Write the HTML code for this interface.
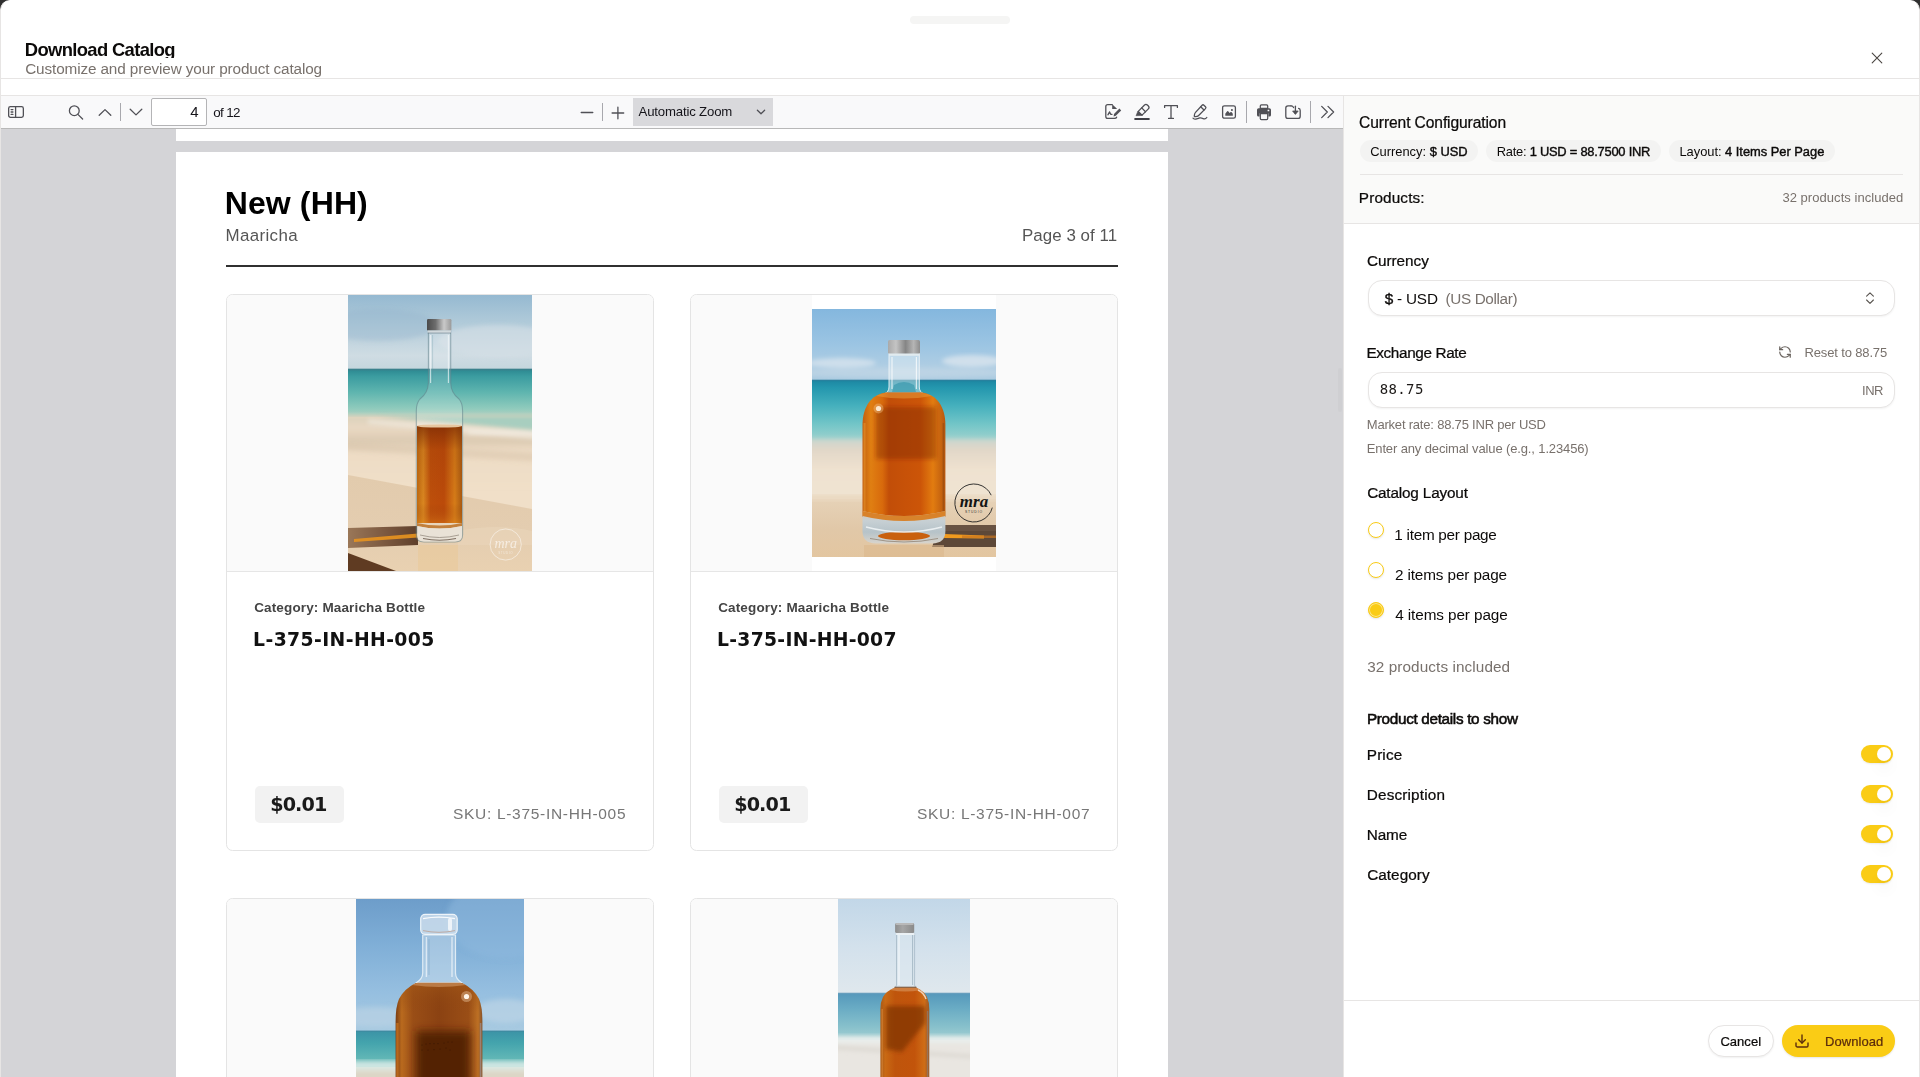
<!DOCTYPE html>
<html lang="en">
<head>
<meta charset="utf-8">
<title>Download Catalog</title>
<style>
*{box-sizing:border-box;margin:0;padding:0}
html,body{width:1920px;height:1077px;overflow:hidden;background:#2f2f2f}
body{font-family:"Liberation Sans",sans-serif;color:#0c0a09;position:relative}
.a{position:absolute}
.t{position:absolute;line-height:1;white-space:pre;font-family:"Liberation Sans",sans-serif}
#drawer{position:absolute;left:0;top:0;width:1920px;height:1100px;background:#fff;border:1px solid #e7e5e4;border-top-color:#fff;border-radius:10px 10px 0 0;overflow:hidden}
svg{position:absolute;overflow:visible}
.ico{stroke:#505056;fill:none;stroke-width:1.3;stroke-linecap:round;stroke-linejoin:round}
.card{position:absolute;width:428px;height:557px;border:1px solid #e4e4e4;border-radius:6.5px;background:#fff;overflow:hidden}
.ci{position:absolute;left:0;top:0;width:426px;height:277px;background:#fafafa;border-bottom:1px solid #e6e6e6}
.badge{position:absolute;left:28px;top:491px;width:89px;height:37px;border-radius:5px;background:#f2f2f2}
.chip{position:absolute;top:140px;height:22px;border-radius:11px;background:#f3f3f2}
.field{position:absolute;left:1368px;width:527px;height:36px;border-radius:14px;border:1px solid #e7e5e4;background:#fff;box-shadow:0 1px 2px rgba(0,0,0,.05)}
.radio{position:absolute;left:1368px;width:16px;height:16px;border-radius:50%;border:1px solid #facc15;background:#fff;box-shadow:0 1px 2px rgba(0,0,0,.10)}
.radio.on{background:#facc15;box-shadow:inset 0 0 0 1px #fde68a,0 1px 2px rgba(0,0,0,.10)}
.sw{position:absolute;left:1861px;width:32px;height:18px;border-radius:9px;background:#facc15;box-shadow:0 1px 2px rgba(0,0,0,.08)}
.sw i{position:absolute;left:16px;top:2px;width:14px;height:14px;border-radius:50%;background:#fff;box-shadow:0 10px 15px -3px rgba(0,0,0,.10),0 4px 6px -4px rgba(0,0,0,.10)}
</style>
</head>
<body>
<div id="drawer">
<div style="position:absolute;left:-1px;top:-1px;width:1920px;height:1100px">
<!-- drawer chrome -->
<div class="a" style="left:910px;top:16px;width:100px;height:8px;border-radius:4px;background:#f5f5f4"></div>
<div class="a" style="left:1px;top:78px;width:1918px;height:1px;background:#e7e5e4"></div>
<div class="a" style="left:1px;top:95px;width:1918px;height:1px;background:#e7e5e4"></div>
<!-- title clip box -->
<div class="a" style="left:20px;top:30px;width:400px;height:28px;overflow:hidden" id="titleclip"></div>
<svg style="left:1871px;top:52px" width="12" height="12" viewBox="0 0 12 12"><path d="M1.2 1.2 L10.8 10.8 M10.8 1.2 L1.2 10.8" stroke="#4a4541" stroke-width="1.1" stroke-linecap="round" fill="none"/></svg>
<!-- pdf viewer background -->
<div class="a" style="left:1px;top:96px;width:1342px;height:1000px;background:#d4d4d7"></div>
<div class="a" style="left:1343px;top:96px;width:1px;height:1000px;background:#e7e5e4"></div>
<div class="a" style="left:1338px;top:368px;width:4px;height:44px;border-radius:2px;background:#cfcfd2"></div>
<!-- pdf.js toolbar -->
<div class="a" style="left:1px;top:96px;width:1342px;height:32px;background:#f9f9fa"></div>
<div class="a" style="left:1px;top:128px;width:1342px;height:1px;background:#b8b8b8"></div>
<!-- sidebar toggle -->
<svg style="left:7px;top:104px" width="18" height="16" viewBox="0 0 18 16"><rect class="ico" x="1.65" y="2.65" width="14.7" height="10.7" rx="1.8"/><path class="ico" d="M8.6 2.8V13.2M4.1 5.6H5.9M4.1 8H5.9M4.1 10.4H5.9" stroke-width="1.1"/></svg>
<!-- search -->
<svg style="left:67px;top:104px" width="18" height="16" viewBox="0 0 18 16"><circle class="ico" cx="7.3" cy="6.7" r="4.9"/><path class="ico" d="M10.9 10.4L15.6 15"/></svg>
<!-- prev / next -->
<svg style="left:97px;top:104px" width="16" height="16" viewBox="0 0 16 16"><path class="ico" d="M2.2 11.3L8 5.6L13.8 11.3"/></svg>
<div class="a" style="left:120px;top:103px;width:1px;height:18px;background:#a8a8ad"></div>
<svg style="left:128px;top:104px" width="16" height="16" viewBox="0 0 16 16"><path class="ico" d="M2.2 5.2L8 10.9L13.8 5.2"/></svg>
<!-- page input -->
<div class="a" style="left:151px;top:98px;width:56px;height:28px;background:#fff;border:1px solid #b4b4b6;border-radius:2px"></div>
<!-- zoom out / in -->
<svg style="left:579px;top:104px" width="16" height="16" viewBox="0 0 16 16"><path class="ico" d="M2.2 8.5H13.8" stroke-width="1.1"/></svg>
<div class="a" style="left:602px;top:103px;width:1px;height:18px;background:#a8a8ad"></div>
<svg style="left:610px;top:105px" width="16" height="16" viewBox="0 0 16 16"><path class="ico" d="M2.1 8H13.7M7.9 2.2V13.8" stroke-width="1.1"/></svg>
<!-- scale select -->
<div class="a" style="left:633px;top:98px;width:140px;height:28px;background:#d9d9dc"></div>
<svg style="left:755px;top:107px" width="12" height="10" viewBox="0 0 12 10"><path class="ico" d="M2.4 3.2L6 6.8L9.6 3.2" stroke="#15141a" stroke-width="1.2"/></svg>
<!-- editor buttons -->
<svg style="left:1103px;top:102px" width="20" height="20" viewBox="0 0 20 20"><path class="ico" d="M9.2 2.7H4.7Q2.8 2.7 2.8 4.6V14.5Q2.8 16.4 4.7 16.4H11.6Q13.2 16.4 13.6 15.2" stroke-width="1.35"/><path d="M9.2 2.2L14.2 7.1H9.2Z" fill="#505056"/><path d="M11 12L16.4 6.6L18.2 8.4L12.8 13.8L10.6 14.4Z" fill="#505056"/><path class="ico" d="M4.9 12.8L6.6 9.9L7.7 12.3H9" stroke-width="1.05"/></svg>
<svg style="left:1132px;top:102px" width="20" height="20" viewBox="0 0 20 20"><g transform="translate(11.9 7.5) rotate(-45)"><path class="ico" d="M-5.3 -2.7H3.6Q5.6 -2.7 5.6 -0.7V0.7Q5.6 2.7 3.6 2.7H-5.3Z" stroke-width="1.3"/><path class="ico" d="M-0.4 -2.7V2.7" stroke-width="1.15"/><path d="M-5.3 -3.1L-5.3 3.1L-10 -1.2Z" fill="#505056" stroke="#505056" stroke-width=".5" stroke-linejoin="round"/></g><path d="M2.4 17H17.6" stroke="#3f3f46" stroke-width="1.8" fill="none"/></svg>
<svg style="left:1161px;top:102px" width="20" height="20" viewBox="0 0 20 20"><path class="ico" d="M3.6 5.4V3.6H16.4V5.4M10 3.6V16.4M7.6 16.4H12.4" stroke-width="1.35"/></svg>
<svg style="left:1190px;top:102px" width="20" height="20" viewBox="0 0 20 20"><path class="ico" d="M12.1 3.2Q13 2.3 13.9 3.2L15.5 4.8Q16.4 5.7 15.5 6.6L8.4 13.7Q7.6 14.5 5.2 14.7Q4.2 14.8 4.3 13.8Q4.5 11.4 5.3 10.6Z"/><path class="ico" d="M10.7 4.7L14 8" stroke-width="1"/><path class="ico" d="M3 16.1Q4.6 17.6 6.6 16.9T9.8 15.9T13.2 16.6T16.8 15.5" stroke-width="1.05"/></svg>
<svg style="left:1219px;top:102px" width="20" height="20" viewBox="0 0 20 20"><rect class="ico" x="3.6" y="3.8" width="12.8" height="12.4" rx="1.8"/><path d="M6.3 13.7V12.1Q6.3 11.5 6.8 11L8.2 9.3Q8.7 8.8 9.2 9.3L10.6 10.9L11.7 10.1Q12.3 9.8 12.7 10.3L13.5 11.3Q13.8 11.7 13.8 12.3V13.7Z" fill="#505056"/><circle cx="12.9" cy="8" r="1.05" fill="#505056"/></svg>
<div class="a" style="left:1246px;top:101px;width:1px;height:22px;background:#a8a8ad"></div>
<!-- print -->
<svg style="left:1254px;top:102px" width="20" height="20" viewBox="0 0 20 20"><path d="M7.4 2.8H12.6Q13.7 2.8 13.7 3.9V6.4H6.3V3.9Q6.3 2.8 7.4 2.8Z" fill="none" stroke="#505056" stroke-width="1.25"/><path d="M4.6 6.2H15.4Q17 6.2 17 7.8V13Q17 14.6 15.4 14.6H14.4V11.2H5.6V14.6H4.6Q3 14.6 3 13V7.8Q3 6.2 4.6 6.2Z" fill="#505056"/><rect x="13.6" y="7.7" width="1.7" height="1.6" rx=".3" fill="#f9f9fa"/><path d="M6.3 11.6H13.7V16.6Q13.7 17.7 12.6 17.7H7.4Q6.3 17.7 6.3 16.6Z" fill="none" stroke="#505056" stroke-width="1.25"/></svg>
<!-- save -->
<svg style="left:1283px;top:102px" width="20" height="20" viewBox="0 0 20 20"><path class="ico" d="M8 3.8H5Q2.8 3.8 2.8 6V14.2Q2.8 16.4 5 16.4H15Q17.2 16.4 17.2 14.2V8.4Q17.2 6.6 15.6 6.4" /><path class="ico" d="M8 3.8Q10 3.8 10.6 5.6" /><path class="ico" d="M12.4 4.2V11.4"/><path d="M9.6 9L12.4 12.4L15.2 9Z" fill="#505056" stroke="#505056" stroke-width="0.8" stroke-linejoin="round"/></svg>
<div class="a" style="left:1310px;top:101px;width:1px;height:22px;background:#a8a8ad"></div>
<svg style="left:1318px;top:103px" width="18" height="18" viewBox="0 0 18 18"><path class="ico" d="M3.7 3.4L9.3 9L3.7 14.6M10 3.4L15.6 9L10 14.6" stroke-width="1.2"/></svg>
<!-- pdf pages -->
<div class="a" style="left:176px;top:129px;width:992px;height:12px;background:#fff"></div>
<div class="a" style="left:176px;top:152px;width:992px;height:960px;background:#fff"></div>
<div class="a" style="left:226px;top:265px;width:892px;height:2px;background:#303030"></div>
<!-- cards -->
<div class="card" style="left:226px;top:294px"><div class="ci"></div><div class="badge"></div></div>
<div class="card" style="left:690px;top:294px"><div class="ci"></div><div class="badge"></div></div>
<div class="card" style="left:226px;top:898px"><div class="ci"></div></div>
<div class="card" style="left:690px;top:898px"><div class="ci"></div></div>
<svg style="left:348px;top:295px;overflow:hidden" width="184" height="276" viewBox="0 0 184 276">
<defs>
<linearGradient id="a1sky" x1="0" y1="0" x2="0" y2="1"><stop offset="0" stop-color="#95b9d1"/><stop offset=".4" stop-color="#b3ccda"/><stop offset=".8" stop-color="#cfdce3"/><stop offset="1" stop-color="#c3d5dd"/></linearGradient>
<linearGradient id="a1sea" x1="0" y1="0" x2="0" y2="1"><stop offset="0" stop-color="#2b8790"/><stop offset=".14" stop-color="#3b9ca0"/><stop offset=".45" stop-color="#5fb5af"/><stop offset=".75" stop-color="#8ecabc"/><stop offset="1" stop-color="#c0d7c6"/></linearGradient>
<linearGradient id="a1sand" x1="0" y1="0" x2="0" y2="1"><stop offset="0" stop-color="#d9d0bb"/><stop offset=".18" stop-color="#e9d9c3"/><stop offset=".36" stop-color="#dccab2"/><stop offset=".5" stop-color="#eddcc5"/><stop offset="1" stop-color="#f0dfc8"/></linearGradient>
<linearGradient id="a1tab" x1="0" y1="0" x2="0" y2="1"><stop offset="0" stop-color="#e2cbad"/><stop offset=".6" stop-color="#e4cdb0"/><stop offset="1" stop-color="#e9d1b1"/></linearGradient>
<linearGradient id="a1liq" x1="0" y1="0" x2="1" y2="0"><stop offset="0" stop-color="#c06a10"/><stop offset=".14" stop-color="#d98620"/><stop offset=".3" stop-color="#bd4f0b"/><stop offset=".6" stop-color="#bb4a0a"/><stop offset=".84" stop-color="#d67c18"/><stop offset="1" stop-color="#a85a12"/></linearGradient>
<linearGradient id="a1liqv" x1="0" y1="0" x2="0" y2="1"><stop offset="0" stop-color="#7a2a05" stop-opacity=".75"/><stop offset=".25" stop-color="#7a2a05" stop-opacity=".15"/><stop offset=".8" stop-color="#7a2a05" stop-opacity="0"/><stop offset="1" stop-color="#e08a20" stop-opacity=".35"/></linearGradient>
<linearGradient id="a1cap" x1="0" y1="0" x2="1" y2="0"><stop offset="0" stop-color="#4b4b4b"/><stop offset=".35" stop-color="#6d6d6d"/><stop offset=".7" stop-color="#c9c9c9"/><stop offset="1" stop-color="#9a9a9a"/></linearGradient>
<linearGradient id="a1sh" x1="0" y1="0" x2="1" y2="0"><stop offset="0" stop-color="#9a7758"/><stop offset=".5" stop-color="#7d5a41"/><stop offset="1" stop-color="#5e3f2b"/></linearGradient>
<filter id="a1bl" x="-10%" y="-10%" width="120%" height="120%"><feGaussianBlur stdDeviation="2"/></filter>
</defs>
<rect width="184" height="76" fill="url(#a1sky)"/>
<rect y="74" width="184" height="52" fill="url(#a1sea)"/>
<rect y="73.6" width="184" height="1.8" fill="#3f7f8c" opacity=".8"/>
<rect y="122" width="184" height="154" fill="#f0dfc8"/><g filter="url(#a1bl)"><rect x="-10" y="120" width="204" height="72" fill="url(#a1sand)"/><rect x="120" y="136" width="70" height="3" fill="#f4efe6" opacity=".8"/><ellipse cx="30" cy="30" rx="60" ry="16" fill="#8fb3cb" opacity=".35"/><ellipse cx="150" cy="46" rx="60" ry="16" fill="#d6e0e6" opacity=".6"/></g>
<g filter="url(#a1bl)"><path d="M30 121L194 121V136Z" fill="#a4cdbf" opacity=".95"/><path d="M20 124L194 137V145L20 129Z" fill="#f1ece2" opacity=".6"/><path d="M-10 147L194 158V167L-10 155Z" fill="#d3bfa6" opacity=".4"/></g>
<path d="M0 180L184 214V276H0Z" fill="url(#a1tab)"/>
<path d="M110 236Q150 228 184 236V250H110Z" fill="#ead6bb" opacity=".6"/>
<!-- shadow -->
<path d="M0 233L70 231V250L0 253Z" fill="url(#a1sh)"/>
<path d="M6 244L70 238.5V242.5L6 247Z" fill="#e8931f" opacity=".9"/>
<path d="M0 258L48 276H0Z" fill="#5f3b22"/>
<path d="M0 253L70 250L118 262L48 276L0 258Z" fill="#e6cfae" opacity=".0"/>
<!-- reflection under bottle -->
<rect x="70" y="250" width="40" height="26" fill="#e9c898" opacity=".55"/>
<!-- bottle glass -->
<path d="M80.4 36V88Q80 98 72 104Q68.3 108 68.3 116V240Q68.3 247 76 247H107Q114.6 247 114.6 240V116Q114.6 108 111 104Q103 98 102.7 88V36Z" fill="#ffffff" fill-opacity=".16" stroke="#5f7f88" stroke-opacity=".55" stroke-width="1.1"/>
<path d="M82.6 40V88M100.4 40V88" stroke="#f4f8f9" stroke-width="1.1" opacity=".7" fill="none"/>
<path d="M84.6 40V88" stroke="#5d8f99" stroke-width=".6" opacity=".45" fill="none"/>
<!-- liquid -->
<rect x="69" y="131" width="45" height="97" fill="url(#a1liq)"/>
<rect x="69" y="131" width="45" height="97" fill="url(#a1liqv)"/>
<ellipse cx="91.5" cy="131" rx="22.5" ry="1.6" fill="#e7c6a0"/>
<path d="M69 228Q91.5 233 114 228V231Q91.5 236 69 231Z" fill="#b96a1c" opacity=".8"/>
<!-- base -->
<path d="M69 231Q91.5 236 114 231V240Q114 246.5 107 246.5H76Q69 246.5 69 240Z" fill="#e9e4dc" opacity=".85"/>
<path d="M72 240Q91.5 245 111 240" stroke="#8d8378" stroke-width="1" fill="none" opacity=".7"/>
<path d="M75 243.5Q91.5 247 108 243.5" stroke="#5b4a3c" stroke-width="1.1" fill="none" opacity=".75"/>
<!-- cap -->
<rect x="79" y="24" width="24.4" height="11.6" rx="1.2" fill="url(#a1cap)"/>
<rect x="79.6" y="35.4" width="23.4" height="2.4" fill="#d7dde0" opacity=".9"/>
<rect x="79.6" y="37.6" width="23.4" height=".9" fill="#6b7f88" opacity=".7"/>
<!-- watermark -->
<circle cx="157.7" cy="249.5" r="15.6" fill="none" stroke="#fff" stroke-opacity=".55" stroke-width=".9"/>
<text x="157.7" y="253" text-anchor="middle" font-family="'Liberation Serif',serif" font-style="italic" font-size="14" fill="#fff" fill-opacity=".6">mra</text>
<text x="157.7" y="258.6" text-anchor="middle" font-family="'Liberation Sans',sans-serif" font-size="3" letter-spacing=".6" fill="#fff" fill-opacity=".5">STUDIO</text>
</svg>

<svg style="left:812px;top:295px;overflow:hidden" width="184" height="276" viewBox="0 0 184 276">
<defs>
<linearGradient id="b2sky" x1="0" y1="0" x2="0" y2="1"><stop offset="0" stop-color="#84b7de"/><stop offset=".5" stop-color="#9cc5e3"/><stop offset=".85" stop-color="#b3cfe3"/><stop offset="1" stop-color="#a7c9df"/></linearGradient>
<linearGradient id="b2sea" x1="0" y1="0" x2="0" y2="1"><stop offset="0" stop-color="#1c86a2"/><stop offset=".12" stop-color="#2497ae"/><stop offset=".4" stop-color="#45b0bd"/><stop offset=".7" stop-color="#74c6c8"/><stop offset="1" stop-color="#a9d4cf"/></linearGradient>
<linearGradient id="b2sand" x1="0" y1="0" x2="0" y2="1"><stop offset="0" stop-color="#c9d6cf"/><stop offset=".15" stop-color="#e1d7c8"/><stop offset=".45" stop-color="#efe2d0"/><stop offset="1" stop-color="#f0e3d2"/></linearGradient>
<linearGradient id="b2tab" x1="0" y1="0" x2="0" y2="1"><stop offset="0" stop-color="#e6d2b7"/><stop offset=".5" stop-color="#e1c8a8"/><stop offset="1" stop-color="#e3c6a0"/></linearGradient>
<linearGradient id="b2liq" x1="0" y1="0" x2="1" y2="0"><stop offset="0" stop-color="#c25f10"/><stop offset=".1" stop-color="#e07f12"/><stop offset=".24" stop-color="#d86a0c"/><stop offset=".32" stop-color="#c24e08"/><stop offset=".7" stop-color="#cc5508"/><stop offset=".85" stop-color="#e27c10"/><stop offset="1" stop-color="#b8570f"/></linearGradient>
<radialGradient id="b2dark" cx=".5" cy=".5" r=".5"><stop offset="0" stop-color="#7c2604" stop-opacity=".6"/><stop offset=".6" stop-color="#86300a" stop-opacity=".4"/><stop offset="1" stop-color="#9a3b0a" stop-opacity="0"/></radialGradient>
<linearGradient id="b2cap" x1="0" y1="0" x2="1" y2="0"><stop offset="0" stop-color="#a9a9a9"/><stop offset=".25" stop-color="#c4c4c4"/><stop offset=".55" stop-color="#858585"/><stop offset=".8" stop-color="#b5b5b5"/><stop offset="1" stop-color="#8d8d8d"/></linearGradient>
<linearGradient id="b2base" x1="0" y1="0" x2="0" y2="1"><stop offset="0" stop-color="#d9c6ad"/><stop offset=".3" stop-color="#c7d0d4"/><stop offset=".65" stop-color="#b6c3c9"/><stop offset="1" stop-color="#d8d4cc"/></linearGradient>
<filter id="b2bl" x="-10%" y="-10%" width="120%" height="120%"><feGaussianBlur stdDeviation="2.2"/></filter>
<clipPath id="b2clip"><rect y="14" width="184" height="248"/></clipPath>
</defs>
<rect width="184" height="276" fill="#fff"/>
<g clip-path="url(#b2clip)">
<rect y="14" width="184" height="73" fill="url(#b2sky)"/>
<g filter="url(#b2bl)"><ellipse cx="30" cy="68" rx="34" ry="5" fill="#d6e3ee" opacity=".8"/><ellipse cx="160" cy="66" rx="30" ry="6" fill="#d9e5ee" opacity=".8"/><ellipse cx="92" cy="78" rx="100" ry="5" fill="#c0d6e6" opacity=".7"/></g>
<rect y="85" width="184" height="64" fill="url(#b2sea)"/>
<rect y="84.6" width="184" height="1.6" fill="#2c7f9c" opacity=".75"/>
<g filter="url(#b2bl)"><rect x="-10" y="144" width="204" height="70" fill="url(#b2sand)"/></g>
<rect y="204" width="184" height="60" fill="url(#b2tab)"/>
<g filter="url(#b2bl)"><rect x="-10" y="200" width="204" height="6" fill="#ead8c0"/></g>
<!-- shadow -->
<path d="M128 230H184V252H120Z" fill="#5d4838"/>
<path d="M128 230H184V236H128Z" fill="#6f5a4a" opacity=".6"/>
<path d="M132 239L172 240.5V243.5L132 243Z" fill="#f09a1e"/>
<path d="M150 240.6H184V243H150Z" fill="#c8751f" opacity=".7"/>
<rect x="52" y="250" width="80" height="14" fill="#dab68a" opacity=".55"/>
<!-- neck glass -->
<path d="M77 58V92Q77 97 72 99H112Q107.3 97 107.3 92V58Z" fill="#e9f2f6" fill-opacity=".42" stroke="#eef4f7" stroke-opacity=".9" stroke-width="1"/>
<path d="M80 62V94M104.4 62V94" stroke="#fff" stroke-width="1.2" opacity=".7" fill="none"/>
<path d="M82 90Q92 84 102 90L104 97H80Z" fill="#2a8fa6" opacity=".55"/>
<!-- body with liquid -->
<path d="M74 97.4H110C125 99.5 133.4 112 133.4 130V222H50.5V130C50.5 112 59 99.5 74 97.4Z" fill="url(#b2liq)"/>

<g filter="url(#b2bl)"><rect x="64" y="112" width="60" height="52" fill="#7a2604" opacity=".42"/></g>
<path d="M74 97.4H110Q116 98.6 120 101Q92 106 64 101Q68 98.6 74 97.4Z" fill="#e89a3a" opacity=".55"/>
<circle cx="66.5" cy="113.5" r="2.6" fill="#fff" opacity=".9"/><circle cx="66.5" cy="113.5" r="5" fill="#ffd9a0" opacity=".35"/>
<path d="M52.5 128V218" stroke="#f0a030" stroke-width="2" opacity=".45" fill="none"/>
<path d="M131.4 128V218" stroke="#8a4510" stroke-width="1.6" opacity=".5" fill="none"/>
<!-- base glass -->
<path d="M50.5 216Q92 226 133.4 216V236Q133.4 248.4 120 248.4H64Q50.5 248.4 50.5 236Z" fill="url(#b2base)"/>
<path d="M50.5 216Q92 226 133.4 216V221Q92 231 50.5 221Z" fill="#d9760f" opacity=".85"/>
<ellipse cx="92" cy="241" rx="26" ry="4.2" fill="#c9600e"/>
<path d="M54 232Q92 242 130 232" stroke="#eef3f5" stroke-width="1.6" fill="none" opacity=".9"/>
<path d="M58 243.5Q92 250.5 126 243.5" stroke="#7d6a58" stroke-width="1" fill="none" opacity=".6"/>
<!-- cap -->
<rect x="76" y="45" width="32" height="13.8" rx="1.6" fill="url(#b2cap)"/>
<rect x="77" y="58.6" width="30.3" height="2.2" fill="#e4ecf0" opacity=".9"/>
<!-- logo -->
<path d="M179.2 200.2A19 19 0 1 0 180.3 212.6" fill="none" stroke="#1f1f1f" stroke-width=".9"/>
<text x="162" y="211.5" text-anchor="middle" font-family="'Liberation Serif',serif" font-style="italic" font-weight="700" font-size="17" fill="#141414">mra</text>
<text x="162" y="218.4" text-anchor="middle" font-family="'Liberation Sans',sans-serif" font-size="3.4" letter-spacing=".9" fill="#333">STUDIO</text>
</g>
</svg>

<svg style="left:356px;top:899px;overflow:hidden" width="168" height="200" viewBox="0 0 168 200">
<defs>
<linearGradient id="c3sky" x1="0" y1="0" x2="0" y2="1"><stop offset="0" stop-color="#6d9dca"/><stop offset=".35" stop-color="#80afd7"/><stop offset=".7" stop-color="#96bfe0"/><stop offset="1" stop-color="#a9cbe1"/></linearGradient>
<linearGradient id="c3sea" x1="0" y1="0" x2="0" y2="1"><stop offset="0" stop-color="#3b93a6"/><stop offset=".3" stop-color="#44a4ad"/><stop offset=".7" stop-color="#62b7b6"/><stop offset="1" stop-color="#8ccac3"/></linearGradient>
<linearGradient id="c3liq" x1="0" y1="0" x2="1" y2="0"><stop offset="0" stop-color="#7a3c12"/><stop offset=".07" stop-color="#b96a1e"/><stop offset=".2" stop-color="#9a4e16"/><stop offset=".5" stop-color="#8b4212"/><stop offset=".84" stop-color="#9a4e16"/><stop offset=".95" stop-color="#bd7024"/><stop offset="1" stop-color="#86522a"/></linearGradient>
<linearGradient id="c3liqv" x1="0" y1="0" x2="0" y2="1"><stop offset="0" stop-color="#a55a18" stop-opacity=".55"/><stop offset=".25" stop-color="#8a4210" stop-opacity="0"/><stop offset="1" stop-color="#8a4210" stop-opacity="0"/></linearGradient>
<filter id="c3bl" x="-10%" y="-10%" width="120%" height="120%"><feGaussianBlur stdDeviation="2.5"/></filter>
<filter id="c3bl2" x="-20%" y="-20%" width="140%" height="140%"><feGaussianBlur stdDeviation="4"/></filter>
</defs>
<rect width="168" height="134" fill="url(#c3sky)"/>
<g filter="url(#c3bl)"><ellipse cx="150" cy="20" rx="60" ry="40" fill="#8fbade" opacity=".5"/><ellipse cx="20" cy="118" rx="40" ry="10" fill="#b9d2e4" opacity=".7"/><ellipse cx="150" cy="112" rx="30" ry="12" fill="#bcd4e6" opacity=".7"/></g>
<rect y="132" width="168" height="40" fill="url(#c3sea)"/>
<rect y="131.4" width="168" height="1.6" fill="#3f89a0" opacity=".7"/>
<rect y="168" width="168" height="32" fill="#e6dccb"/>
<g filter="url(#c3bl)"><rect x="-10" y="162" width="190" height="9" fill="#d9ebe8" opacity=".9"/><rect x="-10" y="172" width="190" height="10" fill="#dcd6c6"/></g>
<!-- lip + neck glass -->
<path d="M66.7 36V74Q66.7 80 60 84H106Q99.5 80 99.5 74V36Z" fill="#dfeaf3" fill-opacity=".38" stroke="#e6eff6" stroke-opacity=".9" stroke-width="1.2"/>
<path d="M70.4 38V78M96 38V78" stroke="#fff" stroke-width="1.4" opacity=".6" fill="none"/>
<path d="M73 40V76" stroke="#5d86ad" stroke-width=".8" opacity=".4" fill="none"/>
<rect x="64.7" y="15.3" width="36.5" height="20" rx="4.5" fill="#d4e2ee" fill-opacity=".78" stroke="#eef4f9" stroke-width="1.2"/>
<path d="M67 31.6Q83 35 99 31.6" stroke="#b9876a" stroke-width="1" opacity=".55" fill="none"/>
<path d="M67 19.6Q83 16.6 99 19.6" stroke="#fff" stroke-width="1.3" opacity=".9" fill="none"/>
<rect x="92" y="19" width="4" height="13" rx="2" fill="#fff" opacity=".7"/>
<!-- body -->
<path d="M60 84H106Q118 90 123 100Q126.4 108 126.4 122V200H39.6V122Q39.6 108 43 100Q48 90 60 84Z" fill="url(#c3liq)"/>
<path d="M60 84H106Q118 90 123 100Q126.4 108 126.4 122V200H39.6V122Q39.6 108 43 100Q48 90 60 84Z" fill="url(#c3liqv)"/>
<g filter="url(#c3bl2)"><rect x="60" y="132" width="54" height="80" fill="#4e1d06" opacity=".9"/></g>
<path d="M62 83.4H104Q108 84.4 110 86Q83 90 56 86Q58 84.4 62 83.4Z" fill="#c98d5a" opacity=".7"/>
<path d="M41.4 124V200" stroke="#c9731f" stroke-width="2.4" opacity=".7" fill="none"/>
<path d="M124.6 124V200" stroke="#9b8f92" stroke-width="1.6" opacity=".7" fill="none"/>
<circle cx="110.5" cy="97.5" r="2.6" fill="#fff"/><circle cx="110.5" cy="97.5" r="5.5" fill="#ffe2c0" opacity=".35"/>
<g fill="#2a1004" opacity=".6"><circle cx="66" cy="146" r=".6"/><circle cx="70" cy="145" r=".6"/><circle cx="74" cy="144.6" r=".6"/><circle cx="78" cy="144.6" r=".6"/><circle cx="82" cy="144.6" r=".6"/><circle cx="88" cy="144" r=".6"/><circle cx="92" cy="143" r=".6"/><circle cx="96" cy="143" r=".6"/><circle cx="66" cy="151" r=".6"/><circle cx="72" cy="151" r=".6"/><circle cx="78" cy="150.6" r=".6"/><circle cx="84" cy="150" r=".6"/><circle cx="90" cy="149" r=".6"/><circle cx="94" cy="151" r=".6"/></g>
</svg>

<svg style="left:838px;top:899px;overflow:hidden" width="132" height="200" viewBox="0 0 132 200">
<defs>
<linearGradient id="d4sky" x1="0" y1="0" x2="0" y2="1"><stop offset="0" stop-color="#c2d7e8"/><stop offset=".5" stop-color="#d3e1ec"/><stop offset="1" stop-color="#e0e8ed"/></linearGradient>
<linearGradient id="d4sea" x1="0" y1="0" x2="0" y2="1"><stop offset="0" stop-color="#5598bb"/><stop offset=".3" stop-color="#69abc4"/><stop offset=".65" stop-color="#85bfcb"/><stop offset="1" stop-color="#a9d3d4"/></linearGradient>
<linearGradient id="d4liq" x1="0" y1="0" x2="1" y2="0"><stop offset="0" stop-color="#a85a18"/><stop offset=".1" stop-color="#c96a14"/><stop offset=".3" stop-color="#bf550c"/><stop offset=".7" stop-color="#c2540b"/><stop offset=".9" stop-color="#cf6d16"/><stop offset="1" stop-color="#9a5a28"/></linearGradient>
<linearGradient id="d4cap" x1="0" y1="0" x2="1" y2="0"><stop offset="0" stop-color="#8d8d8d"/><stop offset=".4" stop-color="#a6a6a6"/><stop offset="1" stop-color="#8a8a8a"/></linearGradient>
<filter id="d4bl" x="-10%" y="-10%" width="120%" height="120%"><feGaussianBlur stdDeviation="2"/></filter>
</defs>
<rect width="132" height="96" fill="url(#d4sky)"/>
<rect y="94" width="132" height="50" fill="url(#d4sea)"/>
<rect y="93.6" width="132" height="1.6" fill="#6d9fbd" opacity=".7"/>
<rect y="141" width="132" height="59" fill="#e9e6e1"/>
<g filter="url(#d4bl)"><rect x="-10" y="137" width="152" height="7" fill="#e9eeec"/><path d="M-10 146L142 156V160L-10 150Z" fill="#d9d6d0" opacity=".8"/></g>
<!-- neck -->
<path d="M58.5 34V86Q58.5 88 56 89.4H79Q76.6 88 76.6 86V34Z" fill="#dce8f0" fill-opacity=".5" stroke="#9fb2c0" stroke-opacity=".8" stroke-width=".9"/>
<path d="M61 36V86" stroke="#fff" stroke-width="1.2" opacity=".7" fill="none"/>
<path d="M74.6 36V86" stroke="#7f97a8" stroke-width=".9" opacity=".6" fill="none"/>
<!-- body -->
<path d="M57 88.4H78Q86 92 89 98Q91.3 103 91.3 110V200H42.4V110Q42.4 103 45 98Q48 92 57 88.4Z" fill="url(#d4liq)"/>
<g filter="url(#d4bl)"><path d="M48 107H87V124L64 153L48 150Z" fill="#7d3006" opacity=".72"/></g>

<path d="M57 88.4H78Q81 89.6 83 91Q67.5 94 52 91Q54 89.6 57 88.4Z" fill="#d99a62" opacity=".6"/>
<path d="M56.6 88.2H78.4" stroke="#5d3a20" stroke-width="1" opacity=".8"/>
<path d="M44.2 110V200" stroke="#d8893a" stroke-width="1.6" opacity=".55" fill="none"/>
<path d="M89.6 112V200" stroke="#8d7a70" stroke-width="1.4" opacity=".7" fill="none"/>
<path d="M80 91Q86 94 88 100" stroke="#fff" stroke-width="1.4" opacity=".7" fill="none"/>
<!-- cap -->
<rect x="57.1" y="24" width="19.1" height="10" rx="1.6" fill="url(#d4cap)"/>
<rect x="57.6" y="24" width="18.1" height="2" rx="1" fill="#b9b9b9"/>
<rect x="58" y="34" width="18.6" height="2" fill="#eef3f6" opacity=".9"/>
</svg>

<!-- right panel -->
<div class="a" style="left:1344px;top:96px;width:575px;height:127px;background:#fafaf9"></div>
<div class="a" style="left:1344px;top:223px;width:575px;height:1px;background:#e7e5e4"></div>
<div class="a" style="left:1360px;top:174px;width:543px;height:1px;background:#e7e5e4"></div>
<!-- chips -->
<div class="chip" style="left:1360px;width:118px"></div>
<div class="chip" style="left:1486px;width:175px"></div>
<div class="chip" style="left:1669px;width:166px"></div>
<!-- currency select -->
<div class="field" style="top:280px"></div>
<svg style="left:1863px;top:290px" width="14" height="16" viewBox="0 0 14 16"><path d="M3.6 6.2L7 2.9L10.4 6.2M3.6 10L7 13.3L10.4 10" fill="none" stroke="#57534e" stroke-width="1.1" stroke-linecap="round" stroke-linejoin="round"/></svg>
<!-- exchange rate -->
<div class="field" style="top:372px"></div>
<svg style="left:1778px;top:345px" width="14" height="14" viewBox="0 0 24 24" fill="none" stroke="#6b6560" stroke-width="2.1" stroke-linecap="round" stroke-linejoin="round"><path d="M21 12a9 9 0 0 0-9-9 9.75 9.75 0 0 0-6.74 2.74L3 8"/><path d="M3 3v5h5"/><path d="M3 12a9 9 0 0 0 9 9 9.75 9.75 0 0 0 6.74-2.74L21 16"/><path d="M16 16h5v5"/></svg>
<!-- radios -->
<div class="radio" style="top:522px"></div>
<div class="radio" style="top:562px"></div>
<div class="radio on" style="top:602px"></div>
<!-- switches -->
<div class="sw" style="top:745px"><i></i></div>
<div class="sw" style="top:785px"><i></i></div>
<div class="sw" style="top:825px"><i></i></div>
<div class="sw" style="top:865px"><i></i></div>
<!-- footer -->
<div class="a" style="left:1344px;top:1000px;width:575px;height:1px;background:#e7e5e4"></div>
<div class="a" style="left:1708px;top:1025px;width:66px;height:32px;border-radius:16px;border:1px solid #e7e5e4;background:#fff;box-shadow:0 1px 2px rgba(0,0,0,.06)"></div>
<div class="a" style="left:1782px;top:1025px;width:113px;height:32px;border-radius:16px;background:#facc15;box-shadow:0 1px 2px rgba(0,0,0,.10)"></div>
<svg style="left:1794px;top:1033.4px" width="16" height="16" viewBox="0 0 24 24" fill="none" stroke="#5c2d0c" stroke-width="2.1" stroke-linecap="round" stroke-linejoin="round"><path d="M21 15v4a2 2 0 0 1-2 2H5a2 2 0 0 1-2-2v-4"/><path d="M7 10l5 5 5-5"/><path d="M12 15V3"/></svg>
<div id="txt" style="position:absolute;left:0;top:0;width:1920px;height:1100px;will-change:transform">
<span class="t" style="left:24.77px;top:41.00px;font-size:18.4px;color:#0c0a09;font-weight:700;letter-spacing:-0.641px;overflow:hidden;height:17.40px;">Download Catalog</span>
<span class="t" style="left:25.19px;top:61.00px;font-size:15.3px;color:#78716c;letter-spacing:-0.121px;">Customize and preview your product catalog</span>
<span class="t" style="left:190.32px;top:104.00px;font-size:15px;color:#15141a;">4</span>
<span class="t" style="left:213.18px;top:106.00px;font-size:13.4px;color:#15141a;letter-spacing:-0.621px;">of 12</span>
<span class="t" style="left:638.58px;top:105.00px;font-size:13.2px;color:#15141a;letter-spacing:-0.176px;">Automatic Zoom</span>
<span class="t" style="left:224.70px;top:187.00px;font-size:32px;color:#000;font-weight:700;letter-spacing:0.123px;">New (HH)</span>
<span class="t" style="left:225.45px;top:228.00px;font-size:16.9px;color:#555;letter-spacing:0.385px;">Maaricha</span>
<span class="t" style="left:1022.03px;top:228.00px;font-size:16.9px;color:#555;letter-spacing:0.050px;">Page 3 of 11</span>
<span class="t" style="left:254.13px;top:601.00px;font-size:13.5px;color:#444444;font-weight:700;letter-spacing:0.150px;">Category: Maaricha Bottle</span>
<span class="t" style="left:253.08px;top:631.00px;font-size:18.8px;color:#111111;font-weight:700;font-family:'DejaVu Sans', 'Liberation Sans', sans-serif;letter-spacing:0.399px;">L-375-IN-HH-005</span>
<span class="t" style="left:270.16px;top:795.00px;font-size:19.2px;color:#1a1a1a;font-weight:700;font-family:'DejaVu Sans', 'Liberation Sans', sans-serif;letter-spacing:-0.872px;">$0.01</span>
<span class="t" style="left:452.93px;top:806.00px;font-size:15.5px;color:#777777;letter-spacing:0.697px;">SKU: L-375-IN-HH-005</span>
<span class="t" style="left:718.13px;top:601.00px;font-size:13.5px;color:#444444;font-weight:700;letter-spacing:0.150px;">Category: Maaricha Bottle</span>
<span class="t" style="left:717.08px;top:631.00px;font-size:18.8px;color:#111111;font-weight:700;font-family:'DejaVu Sans', 'Liberation Sans', sans-serif;letter-spacing:0.266px;">L-375-IN-HH-007</span>
<span class="t" style="left:734.16px;top:795.00px;font-size:19.2px;color:#1a1a1a;font-weight:700;font-family:'DejaVu Sans', 'Liberation Sans', sans-serif;letter-spacing:-0.872px;">$0.01</span>
<span class="t" style="left:916.93px;top:806.00px;font-size:15.5px;color:#777777;letter-spacing:0.701px;">SKU: L-375-IN-HH-007</span>
<span class="t" style="left:1359.10px;top:115.00px;font-size:15.6px;color:#0c0a09;-webkit-text-stroke:0.24px currentColor;letter-spacing:-0.104px;">Current Configuration</span>
<span class="t" style="left:1370.15px;top:146.00px;font-size:12.9px;color:#0c0a09;letter-spacing:0.007px;">Currency: <span style='-webkit-text-stroke:0.4px currentColor'>$ USD</span></span>
<span class="t" style="left:1496.72px;top:146.00px;font-size:12.9px;color:#0c0a09;letter-spacing:-0.242px;">Rate: <span style='-webkit-text-stroke:0.4px currentColor'>1 USD = 88.7500 INR</span></span>
<span class="t" style="left:1679.46px;top:146.00px;font-size:12.9px;color:#0c0a09;letter-spacing:-0.027px;">Layout: <span style='-webkit-text-stroke:0.4px currentColor'>4 Items Per Page</span></span>
<span class="t" style="left:1358.80px;top:190.00px;font-size:15.3px;color:#0c0a09;-webkit-text-stroke:0.24px currentColor;letter-spacing:0.146px;">Products:</span>
<span class="t" style="left:1782.38px;top:191.00px;font-size:13.0px;color:#78716c;letter-spacing:0.048px;">32 products included</span>
<span class="t" style="left:1366.95px;top:253.00px;font-size:15.3px;color:#0c0a09;-webkit-text-stroke:0.24px currentColor;letter-spacing:-0.027px;">Currency</span>
<span class="t" style="left:1384.65px;top:291.00px;font-size:15.3px;color:#0c0a09;letter-spacing:-0.184px;"><span style='-webkit-text-stroke:0.35px currentColor'>$</span> - USD</span>
<span class="t" style="left:1445.51px;top:291.00px;font-size:15.3px;color:#78716c;letter-spacing:-0.361px;">(US Dollar)</span>
<span class="t" style="left:1366.43px;top:345.00px;font-size:15.3px;color:#0c0a09;-webkit-text-stroke:0.24px currentColor;letter-spacing:-0.356px;">Exchange Rate</span>
<span class="t" style="left:1804.48px;top:346.00px;font-size:13.0px;color:#78716c;letter-spacing:-0.142px;">Reset to 88.75</span>
<span class="t" style="left:1379.80px;top:382.00px;font-size:14px;color:#1c1917;font-family:'DejaVu Sans Mono', 'Liberation Mono', monospace;letter-spacing:0.342px;">88.75</span>
<span class="t" style="left:1862.11px;top:384.00px;font-size:13.0px;color:#78716c;letter-spacing:-0.520px;">INR</span>
<span class="t" style="left:1366.75px;top:418.00px;font-size:13.0px;color:#78716c;letter-spacing:-0.198px;">Market rate: 88.75 INR per USD</span>
<span class="t" style="left:1366.75px;top:442.00px;font-size:13.0px;color:#78716c;letter-spacing:-0.131px;">Enter any decimal value (e.g., 1.23456)</span>
<span class="t" style="left:1367.13px;top:485.00px;font-size:15.3px;color:#0c0a09;-webkit-text-stroke:0.24px currentColor;letter-spacing:-0.164px;">Catalog Layout</span>
<span class="t" style="left:1394.30px;top:527.00px;font-size:15.3px;color:#0c0a09;letter-spacing:-0.266px;">1 item per page</span>
<span class="t" style="left:1394.90px;top:567.00px;font-size:15.3px;color:#0c0a09;letter-spacing:-0.118px;">2 items per page</span>
<span class="t" style="left:1395.20px;top:607.00px;font-size:15.3px;color:#0c0a09;letter-spacing:-0.089px;">4 items per page</span>
<span class="t" style="left:1367.19px;top:659.00px;font-size:15.3px;color:#78716c;letter-spacing:0.092px;">32 products included</span>
<span class="t" style="left:1366.98px;top:711.00px;font-size:15.3px;color:#0c0a09;-webkit-text-stroke:0.55px currentColor;letter-spacing:-0.326px;">Product details to show</span>
<span class="t" style="left:1366.80px;top:747.00px;font-size:15.3px;color:#0c0a09;-webkit-text-stroke:0.24px currentColor;letter-spacing:0.137px;">Price</span>
<span class="t" style="left:1366.80px;top:787.00px;font-size:15.3px;color:#0c0a09;-webkit-text-stroke:0.24px currentColor;letter-spacing:0.158px;">Description</span>
<span class="t" style="left:1366.80px;top:827.00px;font-size:15.3px;color:#0c0a09;-webkit-text-stroke:0.24px currentColor;letter-spacing:-0.150px;">Name</span>
<span class="t" style="left:1367.13px;top:867.00px;font-size:15.3px;color:#0c0a09;-webkit-text-stroke:0.24px currentColor;letter-spacing:0.061px;">Category</span>
<span class="t" style="left:1720.48px;top:1035.00px;font-size:13.0px;color:#0c0a09;-webkit-text-stroke:0.24px currentColor;letter-spacing:0.016px;">Cancel</span>
<span class="t" style="left:1824.99px;top:1035.00px;font-size:13.0px;color:#5c2d0c;-webkit-text-stroke:0.24px currentColor;letter-spacing:0.060px;">Download</span>
</div>

</div>
</div>
</body>
</html>
